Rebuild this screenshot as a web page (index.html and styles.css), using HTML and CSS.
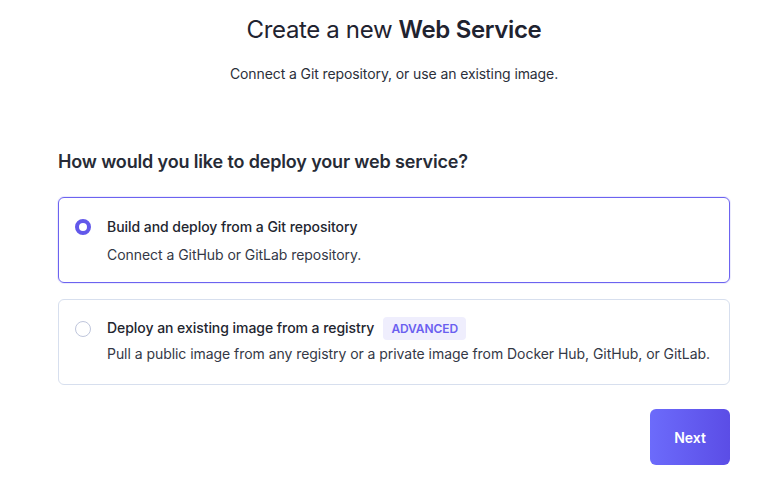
FILE: index.html
```html
<!DOCTYPE html>
<html>
<head>
<meta charset="utf-8">
<link rel="stylesheet" href="styles.css">
</head>
<body>
<div class="page">
  <header class="header">
    <h1 class="title">Create a new <strong>Web Service</strong></h1>
    <p class="subtitle">Connect a Git repository, or use an existing image.</p>
  </header>
  <h2 class="question">How would you like to deploy your web service?</h2>
  <div class="options">
    <label class="option selected">
      <span class="radio checked"></span>
      <span class="option-body">
        <span class="option-title">Build and deploy from a Git repository</span>
        <span class="option-desc">Connect a GitHub or GitLab repository.</span>
      </span>
    </label>
    <label class="option">
      <span class="radio"></span>
      <span class="option-body">
        <span class="option-title">Deploy an existing image from a registry <span class="badge">ADVANCED</span></span>
        <span class="option-desc">Pull a public image from any registry or a private image from Docker Hub, GitHub, or GitLab.</span>
      </span>
    </label>
  </div>
  <div class="actions">
    <button class="next">Next</button>
  </div>
</div>
</body>
</html>
```
FILE: styles.css
```css
* { box-sizing: border-box; }
html, body { margin: 0; padding: 0; background: #fff; }
body {
  font-family: Inter, "Noto Sans", "Liberation Sans", sans-serif;
  color: #1f2330;
}
.page {
  width: 672px;
  margin: 0 0 0 58px;
  padding-top: 14px;
}
.header { text-align: center; }
.title {
  margin: 0;
  font-size: 24px;
  font-weight: 400;
  line-height: 32px;
  letter-spacing: -0.35px;
}
.title strong { font-weight: 600; }
.subtitle {
  margin: 18px 0 0;
  font-size: 14px;
  line-height: 20px;
  color: #2b2f3a;
  letter-spacing: -0.1px;
}
.question {
  margin: 65px 0 0;
  font-size: 18px;
  font-weight: 600;
  line-height: 26px;
  color: #272b36;
  letter-spacing: -0.15px;
}
.options {
  margin-top: 22px;
  display: flex;
  flex-direction: column;
  gap: 16px;
}
.option {
  display: flex;
  align-items: flex-start;
  gap: 16px;
  padding: 19px 16px 19px 16px;
  border: 1px solid #d7dfee;
  border-radius: 6px;
  height: 86px;
}
.option.selected {
  border-color: #6c63f0;
  box-shadow: 0 0 0 1px rgba(108, 99, 240, 0.12);
}
.radio {
  flex: none;
  width: 16px;
  height: 16px;
  margin: 2px 0 0 0;
  border-radius: 50%;
  border: 1px solid #bfc6dc;
  background: #fff;
}
.radio.checked {
  border: 4px solid #6258ea;
}
.option-body {
  display: flex;
  flex-direction: column;
  gap: 8px;
  letter-spacing: -0.05px;
}
.option-title {
  display: flex;
  align-items: center;
  gap: 9px;
  font-size: 14px;
  font-weight: 500;
  line-height: 20px;
  color: #23262f;
  height: 20px;
}
.option-desc {
  font-size: 14px;
  line-height: 20px;
  color: #343846;
  white-space: nowrap;
}
.badge {
  display: inline-block;
  padding: 2px 8px;
  border-radius: 4px;
  background: #efeefd;
  color: #6a5ff0;
  font-size: 12px;
  font-weight: 600;
  line-height: 19px;
  letter-spacing: -0.1px;
}
.option:not(.selected) .option-body { gap: 6px; margin-top: -1px; }
.actions {
  display: flex;
  justify-content: flex-end;
  margin-top: 24px;
}
.next {
  width: 80px;
  height: 56px;
  border: none;
  border-radius: 6px;
  background: linear-gradient(90deg, #6c6bfb 0%, #5b4de6 100%);
  color: #fff;
  font-family: inherit;
  font-size: 14px;
  font-weight: 600;
}
```
